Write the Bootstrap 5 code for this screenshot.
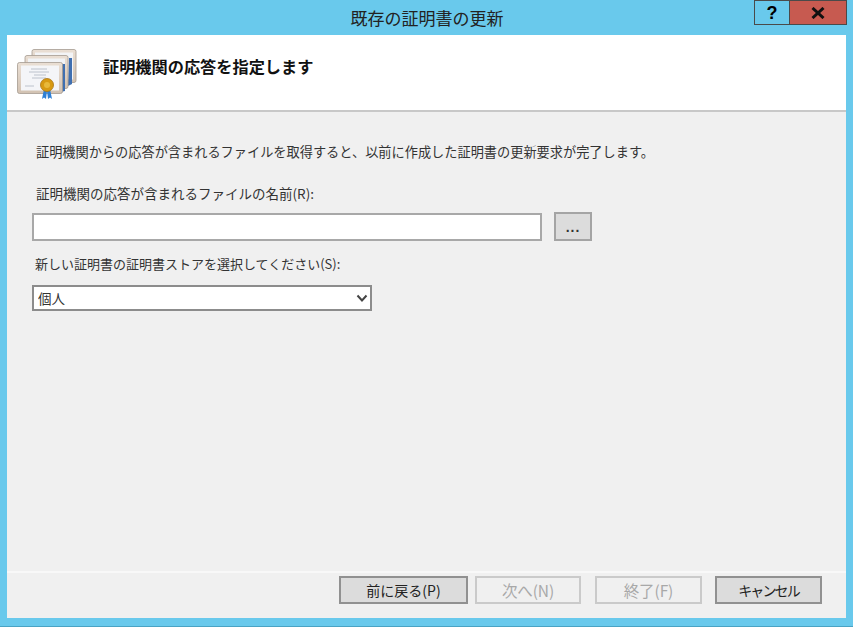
<!DOCTYPE html>
<html lang="ja">
<head>
<meta charset="utf-8">
<title>既存の証明書の更新</title>
<link href="https://cdn.jsdelivr.net/npm/bootstrap@5.3.0/dist/css/bootstrap.min.css" rel="stylesheet">
<style>
html,body{height:100%;margin:0;overflow:hidden}
body{background:#69c9ec;font-family:"Noto Sans CJK JP","Liberation Sans",sans-serif;font-size:14px;color:#222}
.win-frame{height:627px;width:853px;padding:0 7px 8px 7px;border-bottom:1px solid #4aa3c4}
.win-title{display:grid;grid-template-columns:1fr auto 1fr;height:35px;margin-right:-1px}
.win-title-text{font-size:17px;line-height:36px;color:#222;white-space:nowrap}
.win-ctrls{justify-self:end;height:25px}
.ctl{height:25px;border:1px solid #4a4a4a;display:flex;align-items:center;justify-content:center}
.ctl-help{width:35px;border-right:0;background:#69c9ec;font-family:"Liberation Sans",sans-serif;font-weight:700;font-size:18px;color:#000;line-height:1}
.ctl-close{width:58px;background:#c75a50}
.win-client{height:584px;background:#f0f0f0}
.wiz-head{height:77px;background:#fff;border-bottom:2px solid #c8c8c8;padding:0 0 0 9px}
.wiz-icon{margin-top:13px;flex:none}
.wiz-heading{font-size:16.2px;font-weight:700;color:#111;margin:21px 0 0 25px;line-height:20px}
.wiz-body{padding:31px 0 0 25px;height:459px}
.lbl{font-size:13.5px;line-height:18px;margin:0;color:#333;padding-left:4px}
.lbl-intro{font-size:13.2px;margin-bottom:23px}
.lbl-name{margin-bottom:11px}
.file-row{margin-bottom:14px}
.file-input.form-control{width:510px;height:28px;border:2px solid #a8a8a8;border-radius:0;padding:0 4px;background:#fff;margin-top:0}
.browse{width:38px;height:29px;margin:-1px 0 0 12px;border:2px solid #a4a4a4;background:#dcdcdc;border-radius:0;padding:0;color:#333;font-size:14px;line-height:26px;font-family:"Liberation Sans",sans-serif;font-weight:700;letter-spacing:1px}
.store-lbl{margin-bottom:12px;font-size:13px;padding-left:3px}
.store.form-select{width:340px;height:26px;border:2px solid #8c8c8c;border-radius:0;padding:0 4px;font-size:13.5px;line-height:22px;color:#333;background-color:#fff;background-position:right 2px center;background-size:12px 10px;background-image:url("data:image/svg+xml,%3csvg xmlns='http://www.w3.org/2000/svg' viewBox='0 0 12 10'%3e%3cpath d='M1.5 2.5 6 7.5 10.5 2.5' fill='none' stroke='%23444' stroke-width='2'/%3e%3c/svg%3e")}
.wiz-foot{border-top:2px solid #f8f8f8;padding:3px 0 0 0;height:46px}
.wbtn{height:28px;border-radius:0;padding:0;font-size:14px;line-height:24px;border:2px solid #919191;background:#dcdcdc;color:#222}
.wbtn:disabled{opacity:1;background:#f0f0f0;border-color:#cacaca;color:#a8a8a8;font-size:15.5px;letter-spacing:-.1px}
.b-back{width:129px;margin-right:7px}
.b-next{width:106px;margin-right:14px}
.b-done{width:107px;margin-right:13px}
.b-cancel{width:107px;margin-right:24px;letter-spacing:-1.9px}
</style>
</head>
<body>
<div class="win-frame d-flex flex-column">
  <div class="win-title">
    <div></div>
    <div class="win-title-text">既存の証明書の更新</div>
    <div class="win-ctrls d-flex">
      <div class="ctl ctl-help">?</div>
      <div class="ctl ctl-close">
        <svg width="14" height="12" viewBox="0 0 14 12" aria-hidden="true"><path d="M1.5 1 L12.5 11 M12.5 1 L1.5 11" stroke="#111" stroke-width="3" fill="none"/></svg>
      </div>
    </div>
  </div>
  <div class="win-client d-flex flex-column">
    <div class="wiz-head d-flex">
      <svg class="wiz-icon" width="62" height="54" viewBox="0 0 62 54" aria-hidden="true">
        <defs><linearGradient id="g" x1="0" y1="0" x2="0" y2="1"><stop offset="0" stop-color="#eadfd4"/><stop offset="1" stop-color="#d2c2b2"/></linearGradient></defs>
        <rect x="16" y="1.5" width="44" height="33" rx="2" fill="url(#g)" stroke="#a59a90" stroke-width=".8"/>
        <rect x="19" y="4.5" width="38" height="27" fill="#f3f4f6"/>
        <path d="M53 10 h3 v26 l-4 2 z" fill="#3f6fb0"/>
        <rect x="9" y="7.5" width="43" height="33" rx="2" fill="url(#g)" stroke="#a59a90" stroke-width=".8"/>
        <rect x="12" y="10.5" width="37" height="27" fill="#f1f3f6"/>
        <path d="M46 16 h3 v27 l-4 1 z" fill="#3f6fb0"/>
        <rect x="1.5" y="14.5" width="45" height="31" rx="2" fill="url(#g)" stroke="#a59a90" stroke-width=".8"/>
        <rect x="5" y="17.5" width="38" height="25" fill="#f4f5f8"/>
        <path d="M15 21h16M13 24h20M18 27h12M16 30h14M9 38h9" stroke="#bcc2cc" stroke-width="1"/>
        <path d="M26 51 l2 -10 l3 2 l-1 8 l-2 -1.5z M36 51 l-2 -1.5 l-2 1.5 l-1 -8 l3 -2z" fill="#2d7fd6"/>
        <circle cx="31" cy="37" r="6.5" fill="#d89a12" stroke="#a87410" stroke-width=".8"/>
        <circle cx="31" cy="37" r="3" fill="#e8b93a"/>
      </svg>
      <h1 class="wiz-heading">証明機関の応答を指定します</h1>
    </div>
    <div class="wiz-body">
      <p class="lbl lbl-intro">証明機関からの応答が含まれるファイルを取得すると、以前に作成した証明書の更新要求が完了します。</p>
      <p class="lbl lbl-name">証明機関の応答が含まれるファイルの名前(R):</p>
      <div class="file-row d-flex align-items-start">
        <input class="form-control file-input" type="text" aria-label="ファイルの名前">
        <button class="btn browse" type="button">...</button>
      </div>
      <p class="lbl store-lbl">新しい証明書の証明書ストアを選択してください(S):</p>
      <select class="form-select store" aria-label="証明書ストア"><option>個人</option></select>
    </div>
    <div class="wiz-foot d-flex justify-content-end">
      <button class="btn wbtn b-back" type="button">前に戻る(P)</button>
      <button class="btn wbtn b-next" type="button" disabled>次へ(N)</button>
      <button class="btn wbtn b-done" type="button" disabled>終了(F)</button>
      <button class="btn wbtn b-cancel" type="button">キャンセル</button>
    </div>
  </div>
</div>
<script src="https://cdn.jsdelivr.net/npm/bootstrap@5.3.0/dist/js/bootstrap.bundle.min.js"></script>
</body>
</html>
